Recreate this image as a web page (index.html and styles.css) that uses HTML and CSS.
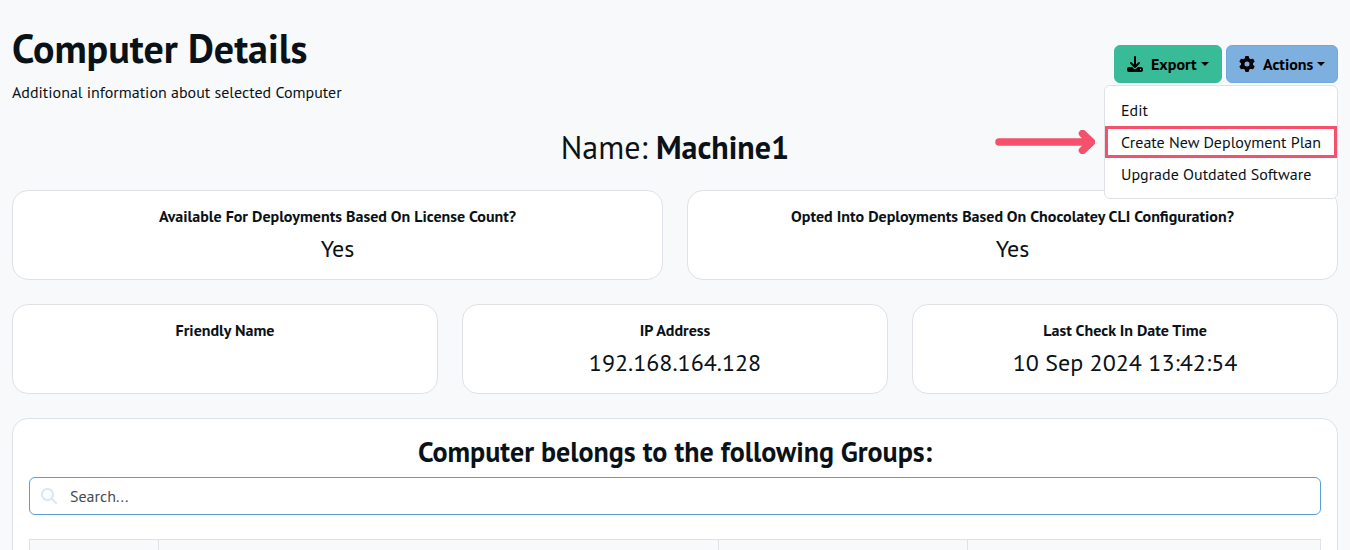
FILE: index.html
```
<!DOCTYPE html>
<html lang="en">
<head>
<meta charset="utf-8">
<title>Computer Details</title>
<link rel="stylesheet" href="styles.css">
</head>
<body>
<main class="page">
  <header class="page-header">
    <div class="heading">
      <h1 class="title">Computer Details</h1>
      <p class="subtitle">Additional information about selected Computer</p>
    </div>
    <div class="toolbar">
      <button class="btn btn-export" type="button">
        <svg class="icon" viewBox="0 0 512 512"><path d="M288 32c0-17.700-14.300-32-32-32s-32 14.300-32 32V274.700l-73.400-73.400c-12.500-12.500-32.800-12.500-45.300 0s-12.500 32.800 0 45.300l128 128c12.500 12.500 32.800 12.500 45.300 0l128-128c12.500-12.500 12.500-32.800 0-45.300s-32.800-12.500-45.300 0L288 274.700V32zM64 352c-35.300 0-64 28.700-64 64v32c0 35.300 28.700 64 64 64H448c35.300 0 64-28.700 64-64V416c0-35.300-28.700-64-64-64H346.500l-45.300 45.300c-25 25-65.500 25-90.500 0L165.500 352H64zm368 56a24 24 0 1 1 0 48 24 24 0 1 1 0-48z"/></svg>
        <span class="btn-label">Export</span><span class="caret"></span>
      </button>
      <div class="dropdown">
        <button class="btn btn-actions" type="button">
          <svg class="icon" viewBox="0 0 512 512"><path d="M495.900 166.600c3.200 8.700 .5 18.400-6.400 24.600l-43.300 39.400c1.100 8.300 1.700 16.800 1.700 25.400s-.6 17.100-1.700 25.400l43.300 39.400c6.900 6.200 9.600 15.900 6.400 24.600c-4.400 11.900-9.700 23.300-15.800 34.300l-4.700 8.100c-6.600 11-14 21.400-22.100 31.200c-5.900 7.200-15.700 9.600-24.500 6.800l-55.700-17.700c-13.400 10.300-28.200 18.900-44 25.400l-12.500 57.100c-2 9.100-9 16.300-18.200 17.800c-13.800 2.300-28 3.500-42.500 3.500s-28.700-1.200-42.500-3.500c-9.200-1.500-16.200-8.700-18.200-17.800l-12.500-57.100c-15.800-6.500-30.600-15.100-44-25.400L83.100 425.900c-8.800 2.800-18.600 .3-24.500-6.800c-8.100-9.800-15.500-20.200-22.100-31.200l-4.700-8.100c-6.100-11-11.400-22.400-15.800-34.300c-3.200-8.700-.5-18.400 6.400-24.600l43.300-39.400C64.600 273.100 64 264.600 64 256s.6-17.100 1.700-25.400L22.400 191.200c-6.900-6.200-9.600-15.900-6.400-24.600c4.400-11.900 9.700-23.300 15.800-34.300l4.700-8.100c6.600-11 14-21.400 22.100-31.200c5.900-7.200 15.700-9.600 24.500-6.800l55.700 17.700c13.400-10.300 28.200-18.900 44-25.400l12.500-57.100c2-9.100 9-16.300 18.200-17.800C227.300 1.200 241.500 0 256 0s28.700 1.200 42.500 3.500c9.200 1.500 16.200 8.700 18.200 17.800l12.500 57.100c15.800 6.500 30.600 15.100 44 25.400l55.700-17.700c8.800-2.800 18.600-.3 24.500 6.800c8.100 9.800 15.500 20.200 22.100 31.200l4.700 8.100c6.100 11 11.400 22.400 15.800 34.300zM256 336a80 80 0 1 0 0-160 80 80 0 1 0 0 160z"/></svg>
          <span class="btn-label">Actions</span><span class="caret"></span>
        </button>
        <div class="menu">
          <a class="menu-item">Edit</a>
          <a class="menu-item item-create">Create New Deployment Plan</a>
          <a class="menu-item">Upgrade Outdated Software</a>
          <svg class="pointer" viewBox="0 0 100 24"><path d="M4 12H94M87.500 3.500L96.500 12L87.500 20.500"/></svg>
        </div>
      </div>
    </div>
  </header>

  <h2 class="machine">Name: <strong>Machine1</strong></h2>

  <section class="row row-two">
    <div class="card"><h3 class="card-title">Available For Deployments Based On License Count?</h3><p class="card-value">Yes</p></div>
    <div class="card"><h3 class="card-title">Opted Into Deployments Based On Chocolatey CLI Configuration?</h3><p class="card-value">Yes</p></div>
  </section>

  <section class="row row-three">
    <div class="card"><h3 class="card-title">Friendly Name</h3></div>
    <div class="card"><h3 class="card-title">IP Address</h3><p class="card-value">192.168.164.128</p></div>
    <div class="card"><h3 class="card-title">Last Check In Date Time</h3><p class="card-value">10 Sep 2024 13:42:54</p></div>
  </section>

  <section class="card groups">
    <h2 class="groups-title">Computer belongs to the following Groups:</h2>
    <div class="search">
      <svg class="icon search-icon" viewBox="0 0 512 512"><path d="M416 208c0 45.900-14.900 88.300-40 122.700L502.600 457.400c12.500 12.500 12.500 32.800 0 45.300s-32.800 12.500-45.300 0L330.700 376c-34.400 25.200-76.800 40-122.700 40C93.100 416 0 322.900 0 208S93.100 0 208 0S416 93.100 416 208zM208 352a144 144 0 1 0 0-288 144 144 0 1 0 0 288z"/></svg>
      <span class="search-text">Search...</span>
    </div>
    <div class="table-head"><div></div><div></div><div></div><div></div></div>
  </section>
</main>
</body>
</html>
```
FILE: styles.css
```
* { box-sizing: border-box; }
body {
  margin: 0;
  background: #f8f9fb;
  color: #0a1218;
  font: 400 16px/24px "PT Sans", "Open Sans", "Noto Sans", sans-serif;
}
h1, h2, h3, p { margin: 0; }
.page { height: 550px; padding: 24px 12px 0; overflow: hidden; }
.page-header { display: flex; justify-content: space-between; height: 83px; }
.title { font-size: 40px; line-height: 48px; font-weight: 700; white-space: nowrap; }
.subtitle { margin-top: 8px; }
.toolbar { display: flex; gap: 4px; padding-top: 21px; align-items: flex-start; }
.dropdown { position: relative; }
.btn {
  display: flex;
  align-items: center;
  height: 38px;
  padding: 0 12px;
  border: 1px solid;
  border-radius: 6px;
  color: #000;
  font: 700 16px/24px "PT Sans", "Open Sans", "Noto Sans", sans-serif;
  white-space: nowrap;
}
.btn-export { width: 108px; background: #38bc98; border-color: #38bc98; }
.btn-actions { width: 112px; background: #7eb0df; border-color: #6ea8dc; }
.icon { width: 16px; height: 16px; flex: none; fill: currentColor; }
.btn-label { margin-left: 8px; }
.caret {
  margin-left: 4px;
  border: 4px solid transparent;
  border-top-color: #000;
  border-bottom: 0;
}
.menu {
  position: absolute;
  z-index: 2;
  top: 40px;
  right: 0;
  width: 234px;
  padding: 8px 0;
  background: #fff;
  border: 1px solid #dee2e6;
  border-radius: 6px;
}
.menu-item { display: block; height: 32px; padding: 4px 16px; white-space: nowrap; }
.item-create { padding: 1px 13px; border: 3px solid #f5516c; }
.pointer {
  position: absolute;
  left: -110px;
  top: 44px;
  width: 100px;
  height: 24px;
  fill: none;
  stroke: #f5516c;
  stroke-width: 7.500;
  stroke-linecap: round;
  stroke-linejoin: round;
}
.machine { margin-top: 21px; text-align: center; font-size: 32px; line-height: 38px; font-weight: 400; }
.machine strong { font-weight: 700; }
.row { display: grid; gap: 24px; }
.row-two { margin-top: 24px; grid-template-columns: 1fr 1fr; }
.row-three { margin-top: 24px; grid-template-columns: repeat(3, 1fr); }
.card { height: 90px; padding: 13px 16px; background: #fff; border: 1px solid #dee2e6; border-radius: 16px; text-align: center; }
.card-title { font-size: 16px; line-height: 24px; font-weight: 700; white-space: nowrap; }
.card-value { margin-top: 6px; font-size: 24px; line-height: 30px; }
.groups { height: 200px; margin-top: 24px; padding: 16px 16px 0; }
.groups-title { font-size: 28px; line-height: 34px; font-weight: 700; }
.search {
  display: flex;
  align-items: center;
  height: 38px;
  margin-top: 8px;
  padding-left: 11px;
  border: 1px solid #5a9fd4;
  border-radius: 6px;
}
.search-icon { color: #d9e7f5; }
.search-text { margin-left: 13px; color: #454b50; }
.table-head {
  display: grid;
  grid-template-columns: 128px 560px 249px 1fr;
  height: 50px;
  margin-top: 24px;
  background: #f8f9fb;
  border: 1px solid #dee2e6;
}
.table-head div + div { border-left: 1px solid #dee2e6; }
```
